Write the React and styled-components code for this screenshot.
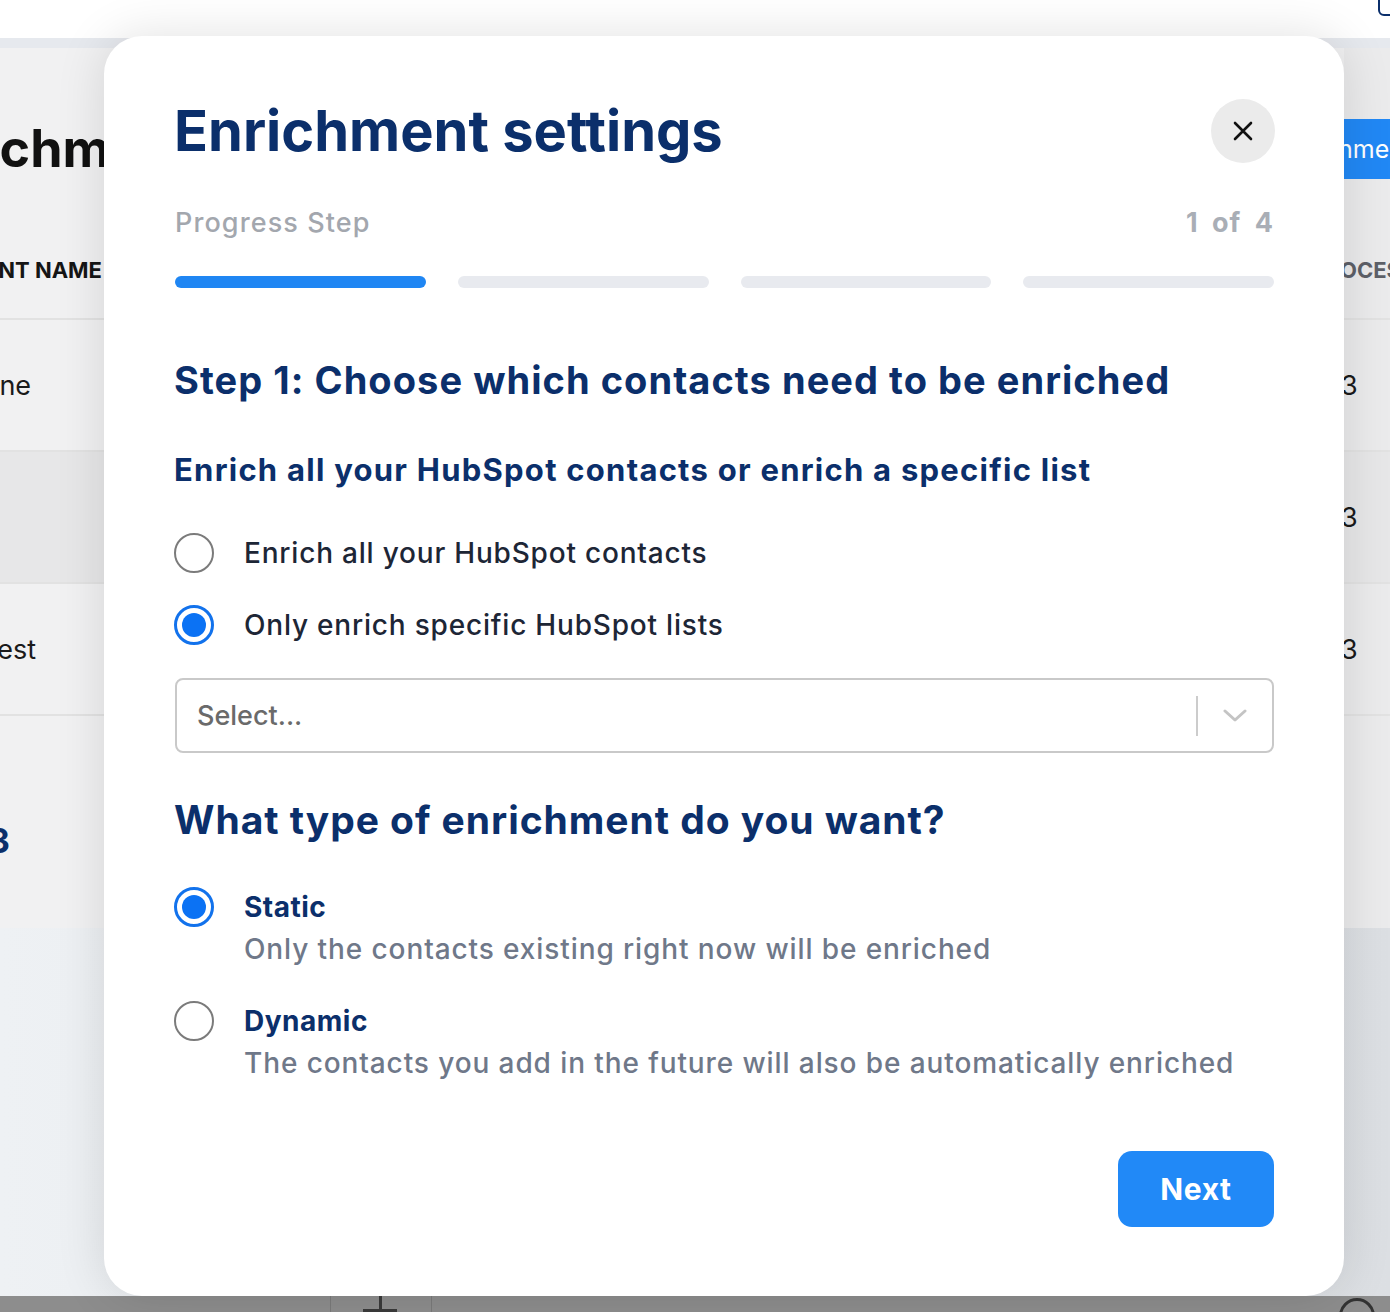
import React from "react";
import styled, { createGlobalStyle } from "styled-components";

const GlobalStyle = createGlobalStyle`
  html, body {
    margin: 0;
    padding: 0;
  }
  body {
    font-family: Inter, "Noto Sans", "Liberation Sans", sans-serif;
    background: #ffffff;
    overflow: hidden;
  }
  * {
    box-sizing: border-box;
  }
`;

/* ---------- page behind the modal ---------- */

const Page = styled.div`
  position: relative;
  height: 1312px;
  display: flex;
  flex-direction: column;
`;

const TopStrip = styled.div`
  height: 38px;
  background: #ffffff;
  display: flex;
  justify-content: flex-end;
`;

const OutlineTab = styled.div`
  width: 30px;
  height: 20px;
  margin-top: -4px;
  margin-right: -18px;
  border: 2px solid #0b2f6b;
  border-radius: 0 0 0 6px;
`;

const Panel = styled.div`
  height: 890px;
  display: grid;
  grid-template-columns: 104px 1fr 46px;
  background: #f1f1f2;
  border-top: 10px solid #e6e9ee;
`;

const Column = styled.div`
  overflow: hidden;
  display: flex;
  flex-direction: column;
  white-space: nowrap;
  background: ${(p) => p.$bg || "transparent"};
`;

const TitleRow = styled.div`
  height: 172px;
  display: flex;
  align-items: center;
  padding-top: 28px;
`;

const PageTitle = styled.h1`
  margin: 0 0 0 ${(p) => p.$shift}px;
  font-size: 52px;
  font-weight: 700;
  color: #111111;
`;

const AddButton = styled.div`
  height: 60px;
  margin-top: 2px;
  display: flex;
  align-items: center;
  background: #2188f5;
  color: #ffffff;
  font-size: 25px;
  font-weight: 400;
  text-indent: -6px;
`;

const HeadCell = styled.div`
  height: 100px;
  display: flex;
  align-items: center;
  padding-top: 2px;
  margin-left: ${(p) => p.$shift}px;
  font-size: 22px;
  font-weight: 700;
  color: ${(p) => p.$color || "#151515"};
  border-bottom: 2px solid #e2e2e2;
`;

const BodyCell = styled.div`
  height: ${(p) => p.$h || 132}px;
  display: flex;
  align-items: center;
  padding-top: ${(p) => p.$pt || 0}px;
  margin-left: ${(p) => p.$shift}px;
  font-size: ${(p) => (p.$bold ? 34 : 27)}px;
  font-weight: ${(p) => (p.$bold ? 700 : 400)};
  color: ${(p) => (p.$bold ? "#0b2f6b" : "#1a1a1a")};
  background: ${(p) => (p.$shade ? "#e7e7e8" : "transparent")};
  border-bottom: ${(p) => (p.$last ? "none" : "2px solid #e2e2e2")};
`;

const Backdrop = styled.div`
  flex: 1;
  background: linear-gradient(90deg, #eef1f4 0%, #dcdfe3 100%);
`;

const BottomBar = styled.div`
  height: 16px;
  background: #8d8d8d;
  display: flex;
  align-items: flex-start;
`;

const BarDivider = styled.div`
  width: 1px;
  height: 16px;
  margin-left: ${(p) => p.$at}px;
  background: #7a7a7a;
`;

const PlusMark = styled.div`
  width: 34px;
  height: 16px;
  margin-left: 32px;
  position: relative;
  &::before {
    content: "";
    position: absolute;
    left: 16px;
    top: 0;
    width: 3px;
    height: 16px;
    background: #3a3a3a;
  }
  &::after {
    content: "";
    position: absolute;
    left: 0;
    top: 13px;
    width: 34px;
    height: 3px;
    background: #3a3a3a;
  }
`;

const Smiley = styled.div`
  width: 36px;
  height: 36px;
  margin-left: auto;
  margin-right: 15px;
  margin-top: 2px;
  border-radius: 50%;
  border: 3px solid #333333;
`;

/* ---------- modal ---------- */

const Modal = styled.div`
  position: absolute;
  top: 36px;
  left: 104px;
  width: 1240px;
  height: 1260px;
  background: #ffffff;
  border-radius: 38px;
  box-shadow: 0 0 50px rgba(0, 0, 0, 0.12);
  padding: 63px 70px 0 71px;
  display: flex;
  flex-direction: column;
`;

const Header = styled.div`
  display: flex;
  justify-content: space-between;
  align-items: center;
  height: 64px;
`;

const ModalTitle = styled.h2`
  margin: 0 0 0 -1px;
  font-size: 56px;
  font-weight: 700;
  color: #0b2f6b;
  letter-spacing: 0;
`;

const CloseButton = styled.button`
  width: 64px;
  height: 64px;
  border: none;
  border-radius: 50%;
  background: #ebebeb;
  display: flex;
  align-items: center;
  justify-content: center;
  padding: 0;
  margin-right: -1px;
  cursor: pointer;
`;

const ProgressLabel = styled.div`
  margin-top: 44px;
  display: flex;
  justify-content: space-between;
  line-height: 32px;
  font-size: 27px;
  font-weight: 500;
  color: #a3a7ae;
  letter-spacing: 1.1px;
`;

const StepCount = styled.span`
  font-weight: 700;
  color: #a9aeb6;
  word-spacing: 6px;
  letter-spacing: 1px;
`;

const Bars = styled.div`
  margin-top: 37px;
  display: grid;
  grid-template-columns: repeat(4, 1fr);
  gap: 32px;
`;

const Bar = styled.div`
  height: 12px;
  border-radius: 6px;
  background: ${(p) => (p.$active ? "#1f86f3" : "#e8eaef")};
`;

const StepHeading = styled.h3`
  margin: 70px 0 0 -1px;
  line-height: 44px;
  font-size: 38px;
  font-weight: 700;
  color: #0b2f6b;
  letter-spacing: 1.05px;
`;

const SubHeading = styled.h4`
  margin: 48px 0 0 -1px;
  line-height: 40px;
  font-size: 31px;
  font-weight: 700;
  color: #0b2f6b;
  letter-spacing: 1.25px;
`;

const RadioGroup = styled.div`
  margin-top: ${(p) => p.$top}px;
  display: flex;
  flex-direction: column;
  gap: ${(p) => p.$gap}px;
`;

const Option = styled.label`
  display: flex;
  align-items: flex-start;
  gap: 30px;
  margin-left: -1px;
  cursor: pointer;
`;

const RadioCircle = styled.span`
  flex: none;
  width: 40px;
  height: 40px;
  border-radius: 50%;
  border: ${(p) => (p.$checked ? "3px solid #1272ec" : "2px solid #7b7b7b")};
  display: flex;
  align-items: center;
  justify-content: center;
  &::after {
    content: "";
    display: ${(p) => (p.$checked ? "block" : "none")};
    width: 24px;
    height: 24px;
    border-radius: 50%;
    background: #0b72f4;
  }
`;

const OptionText = styled.div`
  display: flex;
  flex-direction: column;
`;

const OptionLabel = styled.span`
  line-height: 40px;
  font-size: 28px;
  font-weight: ${(p) => (p.$strong ? 700 : 500)};
  color: ${(p) => (p.$strong ? "#0b2f6b" : "#1d2636")};
  letter-spacing: ${(p) => (p.$strong ? 0.5 : 0.8)}px;
`;

const OptionHint = styled.span`
  margin-top: 2px;
  line-height: 40px;
  font-size: 28px;
  font-weight: 500;
  color: #6f7889;
  letter-spacing: 0.9px;
`;

const SelectBox = styled.div`
  margin-top: 33px;
  height: 75px;
  border: 2px solid #c9c9c9;
  border-radius: 8px;
  display: flex;
  align-items: center;
  padding-left: 20px;
`;

const Placeholder = styled.span`
  flex: 1;
  font-size: 27px;
  font-weight: 500;
  color: #6a6a6a;
`;

const SelectDivider = styled.span`
  width: 2px;
  height: 40px;
  background: #cccccc;
`;

const Chevron = styled.span`
  width: 74px;
  display: flex;
  justify-content: center;
  align-items: center;
`;

const TypeHeading = styled.h3`
  margin: 44px 0 0 -1px;
  line-height: 46px;
  font-size: 39px;
  font-weight: 700;
  color: #0b2f6b;
  letter-spacing: 0.95px;
`;

const Footer = styled.div`
  margin-top: 68px;
  display: flex;
  justify-content: flex-end;
`;

const NextButton = styled.button`
  width: 156px;
  height: 76px;
  border: none;
  border-radius: 14px;
  background: #2189f7;
  color: #ffffff;
  font-family: inherit;
  font-size: 30px;
  font-weight: 700;
  letter-spacing: 0.6px;
  cursor: pointer;
`;

function Radio({ checked, label, hint, strong }) {
  return (
    <Option>
      <RadioCircle $checked={checked} />
      <OptionText>
        <OptionLabel $strong={strong}>{label}</OptionLabel>
        {hint && <OptionHint>{hint}</OptionHint>}
      </OptionText>
    </Option>
  );
}

export default function App() {
  return (
    <>
      <GlobalStyle />
      <Page>
        <TopStrip>
          <OutlineTab />
        </TopStrip>
        <Panel>
          <Column>
            <TitleRow>
              <PageTitle $shift={-100}>Enrichments</PageTitle>
            </TitleRow>
            <HeadCell $shift={-50}>CLIENT NAME</HeadCell>
            <BodyCell $shift={-50}>Phone</BodyCell>
            <BodyCell $shift={0} $shade></BodyCell>
            <BodyCell $shift={-18}>Test</BodyCell>
            <BodyCell $shift={-12} $bold $h={212} $pt={36} $last>
              3
            </BodyCell>
          </Column>
          <Column />
          <Column $bg="#ebebec">
            <TitleRow>
              <AddButton>nment</AddButton>
            </TitleRow>
            <HeadCell $shift={-4} $color="#5d6068">
              OCESSED
            </HeadCell>
            <BodyCell $shift={-3}>3</BodyCell>
            <BodyCell $shift={-3} $shade>
              3
            </BodyCell>
            <BodyCell $shift={-3}>3</BodyCell>
            <BodyCell $shift={0} $h={212} $last></BodyCell>
          </Column>
        </Panel>
        <Backdrop />
        <BottomBar>
          <BarDivider $at={330} />
          <PlusMark />
          <BarDivider $at={34} />
          <Smiley />
        </BottomBar>

        <Modal>
          <Header>
            <ModalTitle>Enrichment settings</ModalTitle>
            <CloseButton aria-label="Close">
              <svg width="22" height="22" viewBox="0 0 22 22">
                <path
                  d="M3 3 L19 19 M19 3 L3 19"
                  stroke="#111111"
                  strokeWidth="2.6"
                  strokeLinecap="round"
                />
              </svg>
            </CloseButton>
          </Header>

          <ProgressLabel>
            <span>Progress Step</span>
            <StepCount>1 of 4</StepCount>
          </ProgressLabel>
          <Bars>
            <Bar $active />
            <Bar />
            <Bar />
            <Bar />
          </Bars>

          <StepHeading>Step 1: Choose which contacts need to be enriched</StepHeading>
          <SubHeading>Enrich all your HubSpot contacts or enrich a specific list</SubHeading>

          <RadioGroup $top={43} $gap={32}>
            <Radio label="Enrich all your HubSpot contacts" />
            <Radio checked label="Only enrich specific HubSpot lists" />
          </RadioGroup>

          <SelectBox>
            <Placeholder>Select...</Placeholder>
            <SelectDivider />
            <Chevron>
              <svg width="24" height="14" viewBox="0 0 24 14">
                <path
                  d="M2 2 L12 11 L22 2"
                  fill="none"
                  stroke="#c4c4c4"
                  strokeWidth="3"
                  strokeLinecap="round"
                  strokeLinejoin="round"
                />
              </svg>
            </Chevron>
          </SelectBox>

          <TypeHeading>What type of enrichment do you want?</TypeHeading>

          <RadioGroup $top={44} $gap={32}>
            <Radio
              checked
              strong
              label="Static"
              hint="Only the contacts existing right now will be enriched"
            />
            <Radio
              strong
              label="Dynamic"
              hint="The contacts you add in the future will also be automatically enriched"
            />
          </RadioGroup>

          <Footer>
            <NextButton>Next</NextButton>
          </Footer>
        </Modal>
      </Page>
    </>
  );
}
